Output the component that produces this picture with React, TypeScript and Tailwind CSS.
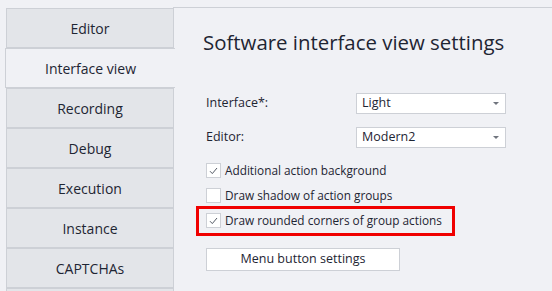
const tabs = ["Editor", "Interface view", "Recording", "Debug", "Execution", "Instance", "CAPTCHAs", ""];

function Check() {
  return (
    <svg width="9" height="8" viewBox="0 0 9 8" fill="none">
      <path d="M1 4.2 L3.3 6.6 L8 1" stroke="#555b66" strokeWidth="1" />
    </svg>
  );
}

function Checkbox({ checked, label }: { checked: boolean; label: string }) {
  return (
    <div className="flex items-center h-[25px]">
      <div className="w-[15px] h-[15px] border border-[#cdd0d6] bg-white flex items-center justify-center">
        {checked && <Check />}
      </div>
      <span className="ml-[4px] text-[11.8px] text-[#1e2533]">{label}</span>
    </div>
  );
}

function Select({ value }: { value: string }) {
  return (
    <div className="w-[150px] h-[21px] border border-[#cdd0d6] bg-white flex items-center justify-between pl-[5px] pr-[6px]">
      <span className="text-[12.5px] text-[#1e2533]">{value}</span>
      <span className="w-0 h-0 border-l-[3px] border-r-[3px] border-t-[3px] border-l-transparent border-r-transparent border-t-[#70757e]" />
    </div>
  );
}

export default function App() {
  return (
    <div
      className="w-[552px] h-[291px] bg-[#f0f1f5] flex overflow-hidden"
      style={{ fontFamily: '"Open Sans", "Noto Sans", sans-serif' }}
    >
      <div className="w-[174px] shrink-0 pt-[8px] pl-[6px] flex flex-col">
        {tabs.map((t, i) =>
          t === "Interface view" ? (
            <div
              key={i}
              className="h-[40px] w-[170px] shrink-0 -ml-[1px] border-l border-t border-b border-[#cdd0d6] bg-[#f0f1f5] flex items-center justify-center text-[14px] text-[#1e2533] relative z-10"
            >
              {t}
            </div>
          ) : (
            <div
              key={i}
              className="h-[40px] w-[168px] shrink-0 border border-[#cdd0d6] bg-[#e3e5e9] flex items-center justify-center text-[14px] text-[#1e2533]"
            >
              {t}
            </div>
          )
        )}
      </div>
      <div className="flex-1 mt-[7px] border-t border-[#cdd0d6] pl-[33px] -ml-[1px]">
        <div className="-ml-[3px] mt-[16px] h-[36px] text-[20.4px] text-[#1e2533] leading-[36px]">
          Software interface view settings
        </div>
        <div className="mt-[33px] flex items-center h-[21px]">
          <span className="w-[150px] text-[12.5px] text-[#1e2533]">Interface*:</span>
          <Select value="Light" />
        </div>
        <div className="mt-[13px] flex items-center h-[21px]">
          <span className="w-[150px] text-[12.5px] text-[#1e2533]">Editor:</span>
          <Select value="Modern2" />
        </div>
        <div className="mt-[10px]">
          <Checkbox checked label="Additional action background" />
          <Checkbox checked={false} label="Draw shadow of action groups" />
          <div className="relative">
            <div className="absolute -left-[10px] -top-[2px] w-[259px] h-[30px] border-[3px] border-[#f00000]" />
            <Checkbox checked label="Draw rounded corners of group actions" />
          </div>
        </div>
        <button className="mt-[15px] w-[194px] h-[23px] bg-white border border-[#cdd0d6] text-[12.5px] text-[#1e2533] flex items-center justify-center">
          Menu button settings
        </button>
      </div>
    </div>
  );
}
